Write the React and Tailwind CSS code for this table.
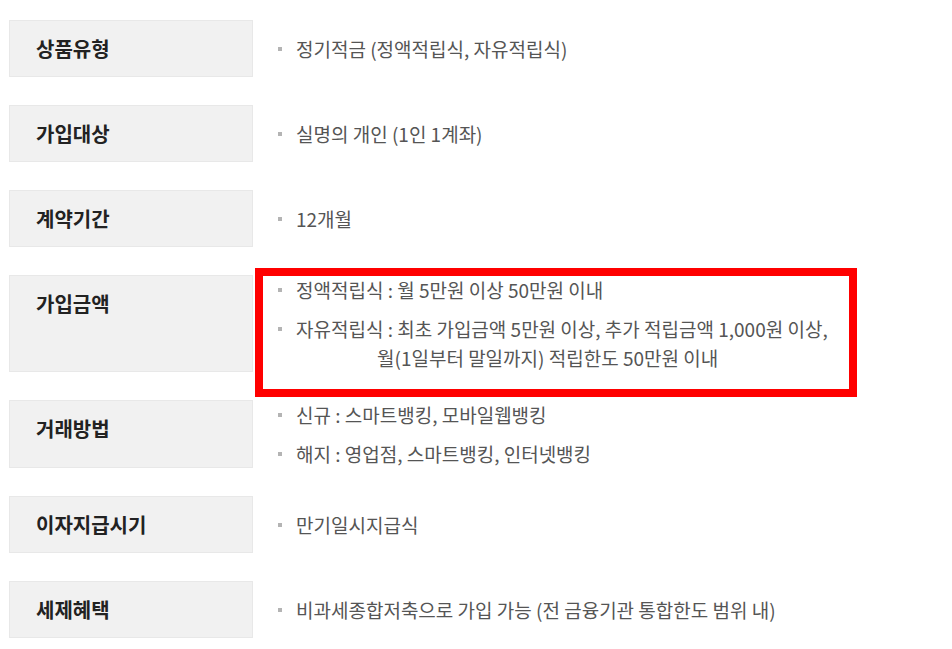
import React from "react";

const rows = [
  { label: "상품유형", items: [["정기적금 (정액적립식, 자유적립식)"]] },
  { label: "가입대상", items: [["실명의 개인 (1인 1계좌)"]] },
  { label: "계약기간", items: [["12개월"]] },
  {
    label: "가입금액",
    highlight: true,
    items: [
      ["정액적립식 : 월 5만원 이상 50만원 이내"],
      [
        "자유적립식 : 최초 가입금액 5만원 이상, 추가 적립금액 1,000원 이상,",
        "월(1일부터 말일까지) 적립한도 50만원 이내",
      ],
    ],
  },
  {
    label: "거래방법",
    items: [["신규 : 스마트뱅킹, 모바일웹뱅킹"], ["해지 : 영업점, 스마트뱅킹, 인터넷뱅킹"]],
  },
  { label: "이자지급시기", items: [["만기일시지급식"]] },
  { label: "세제혜택", items: [["비과세종합저축으로 가입 가능 (전 금융기관 통합한도 범위 내)"]] },
];

export default function App() {
  return (
    <div className="min-h-[649px] w-[952px] bg-white pt-[20px] pl-[9px] font-['Noto_Sans_CJK_KR','Noto_Sans',sans-serif]">
      {rows.map((row) => (
        <div key={row.label} className="relative mb-[28px] flex items-stretch">
          <div className="w-[244px] shrink-0 border border-[#e8e8e8] bg-[#f1f1f1] pl-[26px] pt-[17px] pb-[16px] text-[20px] font-bold leading-[22px] text-[#222]">
            {row.label}
          </div>
          <div className="flex flex-col justify-center gap-[10px] pl-[25px] text-[19px] leading-[29px] text-[#555]">
            {row.items.map((lines, i) => (
              <div key={i} className="flex items-start">
                <span className="mt-[13px] mr-[14px] h-[4px] w-[4px] shrink-0 bg-[#b4b4b4]" />
                <div className="flex flex-col">
                  {lines.map((l, j) => (
                    <div key={j} className={j > 0 ? "whitespace-nowrap pl-[81px]" : "whitespace-nowrap"}>
                      {l}
                    </div>
                  ))}
                </div>
              </div>
            ))}
          </div>
          {row.highlight && (
            <div className="pointer-events-none absolute left-[246px] top-[-7px] h-[129px] w-[602px] border-[8px] border-[#ff0000]" />
          )}
        </div>
      ))}
    </div>
  );
}
